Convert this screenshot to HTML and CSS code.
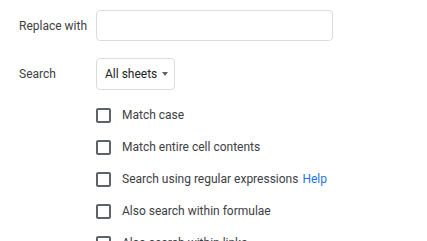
FILE: index.html
```html
<!DOCTYPE html>
<html lang="en">
<head>
    <meta charset="UTF-8">
    <title>Find and replace</title>
    <link rel="stylesheet" href="styles.css">
</head>
<body>

<div class="dialog">
    <!-- Replace row -->
    <div class="field-row">
        <label class="field-label" for="replace">Replace with</label>
        <input type="text" id="replace" class="text-box">
    </div>

    <!-- Search scope -->
    <div class="field-row scope-row">
        <span class="field-label">Search</span>
        <div class="select-box">
            <span>All sheets</span>
            <span class="arrow"></span>
        </div>
    </div>

    <!-- Options -->
    <div class="options">
        <div class="option"><span class="check"></span>Match case</div>
        <div class="option"><span class="check"></span>Match entire cell contents</div>
        <div class="option"><span class="check"></span>Search using regular expressions <a class="help" href="#">Help</a></div>
        <div class="option"><span class="check"></span>Also search within formulae</div>
        <div class="option"><span class="check"></span>Also search within links</div>
    </div>
</div>

</body>
</html>
```

FILE: styles.css
```css
body {
    margin: 0;
    padding: 0;
    background: #fff;
    font-family: Roboto, Arial, sans-serif;
    font-size: 12px;
    color: #3c4043;
    overflow: hidden;
}

.dialog {
    padding: 10px 0 0 19px;
}

.field-row {
    display: grid;
    grid-template-columns: 77px auto;
    align-items: center;
    justify-items: start;
}

.scope-row {
    margin-top: 17px;
}

.text-box {
    width: 237px;
    height: 31px;
    box-sizing: border-box;
    border: 1px solid #dadce0;
    border-radius: 4px;
    margin: 0;
    outline: none;
}

.select-box {
    width: 79px;
    height: 32px;
    box-sizing: border-box;
    border: 1px solid #dadce0;
    border-radius: 4px;
    display: flex;
    align-items: center;
    justify-content: space-between;
    padding: 0 6px 0 8px;
    color: #202124;
}

.arrow {
    width: 0;
    height: 0;
    border-left: 3.5px solid transparent;
    border-right: 3.5px solid transparent;
    border-top: 4px solid #5f6368;
}

/* Checkbox list */
.options {
    margin-top: 9px;
    margin-left: 77px;
}

.option {
    height: 32px;
    display: flex;
    align-items: center;
}

.check {
    width: 15px;
    height: 15px;
    box-sizing: border-box;
    border: 2px solid #5f6368;
    border-radius: 2px;
    margin-right: 11px;
    flex-shrink: 0;
}

.help {
    color: #1a73e8;
    text-decoration: none;
    margin-left: 4px;
}
```
